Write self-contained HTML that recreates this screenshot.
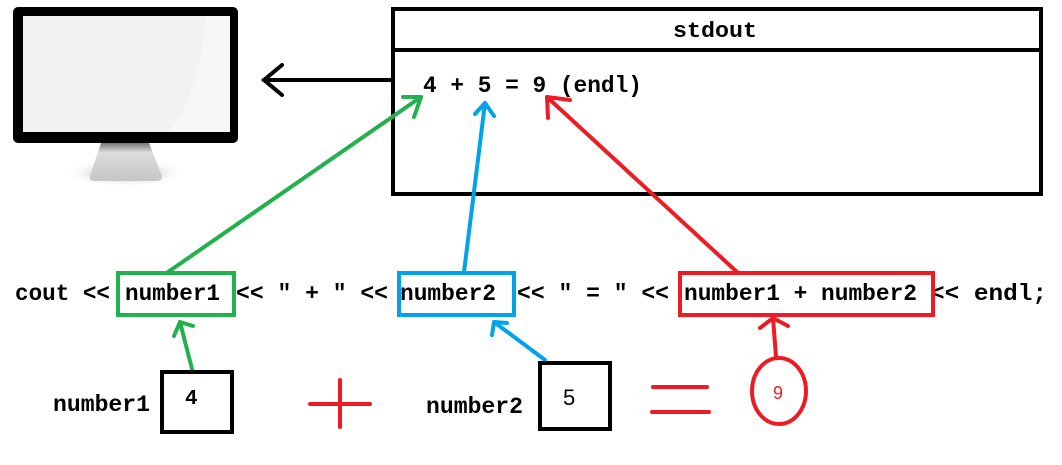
<!DOCTYPE html>
<html><head><meta charset="utf-8"><style>
html,body{margin:0;padding:0;background:#fff;width:1062px;height:465px;overflow:hidden}
text{font-family:"Liberation Mono",monospace;font-weight:bold;fill:#000}
</style></head><body>
<svg width="1062" height="465" viewBox="0 0 1062 465" xmlns="http://www.w3.org/2000/svg">
<defs>
<linearGradient id="st" x1="0" y1="0" x2="0" y2="1"><stop offset="0" stop-color="#777"/><stop offset="0.25" stop-color="#ddd"/><stop offset="1" stop-color="#c6c6c6"/></linearGradient>
<radialGradient id="sh"><stop offset="0" stop-color="#888"/><stop offset="1" stop-color="#fff" stop-opacity="0"/></radialGradient>
</defs>
<!-- monitor -->
<ellipse cx="125" cy="173" rx="62" ry="14" fill="url(#sh)"/>
<path d="M101 143 L149 143 L162 176 Q162 181 157 181 L94 181 Q89 181 90 176 Z" fill="url(#st)"/>
<rect x="13" y="7" width="225" height="136" rx="5" fill="#000"/>
<rect x="23" y="16" width="207" height="116" fill="#f2f2f2"/>
<path d="M205 16 L230 16 L230 132 L170 132 Q205 80 205 16 Z" fill="#f7f7f7"/>
<!-- black arrow -->
<g stroke="#000" stroke-width="4" fill="none" stroke-linecap="round">
<line x1="392" y1="80" x2="264" y2="80"/>
<polyline points="282,65 264,80 282,95"/>
</g>
<!-- stdout box -->
<rect x="393" y="9" width="648" height="185" fill="none" stroke="#000" stroke-width="4"/>
<line x1="393" y1="50" x2="1041" y2="50" stroke="#000" stroke-width="4"/>
<text x="673" y="37" font-size="22" textLength="84" lengthAdjust="spacingAndGlyphs">stdout</text>
<text x="423" y="92" font-size="23" textLength="219" lengthAdjust="spacingAndGlyphs">4 + 5 = 9 (endl)</text>
<!-- code line -->
<g font-size="23">
<text x="15" y="300" textLength="95" lengthAdjust="spacingAndGlyphs">cout &lt;&lt;</text>
<text x="125" y="300" textLength="95" lengthAdjust="spacingAndGlyphs">number1</text>
<text x="236" y="300" textLength="152" lengthAdjust="spacingAndGlyphs">&lt;&lt; " + " &lt;&lt;</text>
<text x="400" y="300" textLength="96" lengthAdjust="spacingAndGlyphs">number2</text>
<text x="517" y="300" textLength="152" lengthAdjust="spacingAndGlyphs">&lt;&lt; " = " &lt;&lt;</text>
<text x="684" y="300" textLength="233" lengthAdjust="spacingAndGlyphs">number1 + number2</text>
<text x="930" y="300" textLength="117" lengthAdjust="spacingAndGlyphs">&lt;&lt; endl;</text>
</g>
<rect x="118" y="273" width="116" height="42" fill="none" stroke="#22b14c" stroke-width="4"/>
<rect x="399" y="273" width="115" height="42" fill="none" stroke="#00a2e8" stroke-width="4"/>
<rect x="680" y="273" width="253" height="42" fill="none" stroke="#ed1c24" stroke-width="4"/>
<!-- arrows -->
<g fill="none" stroke-width="4" stroke-linecap="round" stroke-linejoin="round">
<g stroke="#22b14c">
<line x1="168" y1="272" x2="421" y2="97"/><polyline points="403,97 421,97 414,117"/>
<line x1="192" y1="369" x2="180" y2="322"/><polyline points="174,336 180,322 193,326"/>
</g>
<g stroke="#00a2e8">
<line x1="464" y1="272" x2="485" y2="103"/><polyline points="475,114 485,103 494,116"/>
<line x1="545" y1="360" x2="494" y2="322"/><polyline points="492,335 494,322 507,323"/>
</g>
<g stroke="#ed1c24">
<line x1="737" y1="272" x2="547" y2="97"/><polyline points="548,118 547,97 570,100"/>
<line x1="776" y1="357" x2="773" y2="318"/><polyline points="760,328 773,318 788,326"/>
<line x1="310" y1="404" x2="370" y2="404"/><line x1="340" y1="380" x2="340" y2="427"/>
<line x1="653" y1="387" x2="707" y2="387"/><line x1="652" y1="412" x2="709" y2="412"/>
<ellipse cx="779" cy="391" rx="27" ry="33"/>
</g>
</g>
<!-- bottom -->
<text x="53" y="411" font-size="23" textLength="97" lengthAdjust="spacingAndGlyphs">number1</text>
<rect x="162" y="372" width="70" height="60" fill="none" stroke="#000" stroke-width="4"/>
<text x="185" y="404" font-size="21">4</text>
<text x="426" y="413" font-size="23" textLength="97" lengthAdjust="spacingAndGlyphs">number2</text>
<rect x="540" y="363" width="70" height="66" fill="none" stroke="#000" stroke-width="4"/>
<text x="563" y="405" font-size="22" style="font-family:'Liberation Sans',sans-serif;font-weight:normal">5</text>
<text x="773" y="399" font-size="18" style="font-family:'Liberation Sans',sans-serif;font-weight:normal;fill:#ed1c24">9</text>
</svg>
</body></html>
